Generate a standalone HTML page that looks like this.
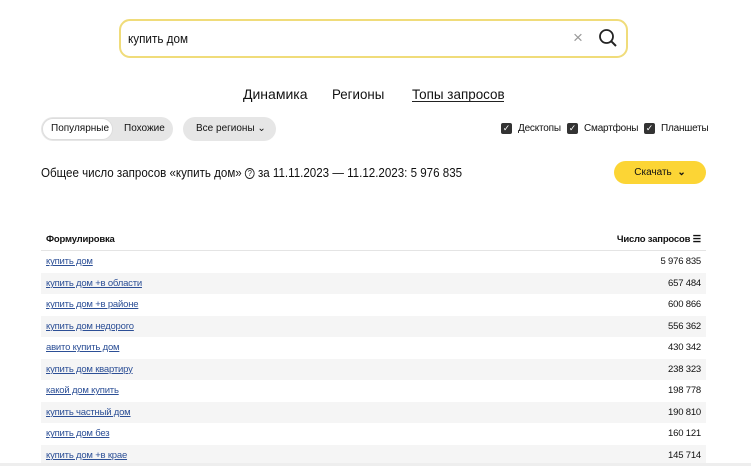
<!DOCTYPE html>
<html><head><meta charset="utf-8"><style>
body{margin:0;width:751px;height:466px;background:#fff;font-family:"Liberation Sans",sans-serif;position:relative;overflow:hidden;color:#111}
.a{position:absolute}
.search{left:119px;top:19px;width:505px;height:35px;border:2px solid #f0dc7a;border-radius:11px}
.tab{top:86px;font-size:14px}
.seg{top:117px;height:24px;border-radius:12px;background:#e6e6e6;font-size:10px}
.cb{top:123px;width:11px;height:11px;background:#333;border-radius:2px;color:#fff;font-size:9px;line-height:11px;text-align:center}
.cl{top:123px;font-size:10px;line-height:12px;letter-spacing:-0.2px}
table{position:absolute;left:41px;top:229px;width:665px;border-collapse:collapse;font-size:9.5px;letter-spacing:-0.2px}
td,th{height:21.5px;padding:0 5px;line-height:21px}
th{font-weight:bold;text-align:left;border-bottom:1px solid #e4e4e4;height:19px}
td a{color:#2c4f96;text-decoration:underline}
td:last-child,th:last-child{text-align:right}
tr:nth-child(odd) td{background:#f5f5f5}
</style></head><body>
<div class="a search"></div>
<div class="a" style="left:128px;top:31px;font-size:13px;transform:scaleX(0.9);transform-origin:left">купить дом</div>
<div class="a" style="left:573px;top:28px;font-size:17px;color:#999">×</div>
<svg class="a" style="left:598px;top:28px" width="20" height="20" viewBox="0 0 20 20"><circle cx="8.5" cy="8.5" r="6.5" fill="none" stroke="#222" stroke-width="1.8"/><line x1="13.2" y1="13.2" x2="18" y2="18" stroke="#222" stroke-width="2"/></svg>
<div class="a tab" style="left:243px">Динамика</div>
<div class="a tab" style="left:332px;transform:scaleX(0.95);transform-origin:left">Регионы</div>
<div class="a tab" style="left:412px;transform:scaleX(0.96);transform-origin:left">Топы запросов</div>
<div class="a" style="left:412px;top:101px;width:92px;height:1px;background:#222"></div>
<div class="a seg" style="left:41px;width:132px"></div>
<div class="a" style="left:42px;top:118px;width:71px;height:22px;border-radius:11px;background:#fff;border:1px solid #ddd;box-sizing:border-box"></div>
<div class="a" style="left:51px;top:123px;font-size:10px">Популярные</div>
<div class="a" style="left:124px;top:123px;font-size:10px">Похожие</div>
<div class="a seg" style="left:183px;width:93px"></div>
<div class="a" style="left:196px;top:123px;font-size:10px">Все регионы ⌄</div>
<div class="a cb" style="left:501px">✓</div><div class="a cl" style="left:518px">Десктопы</div>
<div class="a cb" style="left:567px">✓</div><div class="a cl" style="left:584px">Смартфоны</div>
<div class="a cb" style="left:644px">✓</div><div class="a cl" style="left:661px">Планшеты</div>
<div class="a" style="left:41px;top:165px;font-size:13px;white-space:nowrap;transform:scaleX(0.89);transform-origin:left">Общее число запросов «купить дом» <span style="display:inline-block;width:9px;height:9px;border:1.3px solid #222;border-radius:50%;font-size:8px;line-height:9px;text-align:center;vertical-align:1px">?</span> за 11.11.2023 — 11.12.2023: 5 976 835</div>
<div class="a" style="left:614px;top:161px;width:92px;height:23px;border-radius:12px;background:#fcd535;font-size:10px;line-height:23px;text-align:center">Скачать &nbsp;<b>⌄</b></div>
<table>
<tr><th>Формулировка</th><th>Число запросов ☰</th></tr>
<tr><td><a>купить дом</a></td><td>5 976 835</td></tr>
<tr><td><a>купить дом +в области</a></td><td>657 484</td></tr>
<tr><td><a>купить дом +в районе</a></td><td>600 866</td></tr>
<tr><td><a>купить дом недорого</a></td><td>556 362</td></tr>
<tr><td><a>авито купить дом</a></td><td>430 342</td></tr>
<tr><td><a>купить дом квартиру</a></td><td>238 323</td></tr>
<tr><td><a>какой дом купить</a></td><td>198 778</td></tr>
<tr><td><a>купить частный дом</a></td><td>190 810</td></tr>
<tr><td><a>купить дом без</a></td><td>160 121</td></tr>
<tr><td><a>купить дом +в крае</a></td><td>145 714</td></tr>
</table>
<div class="a" style="left:0;top:463px;width:751px;height:3px;background:#eee"></div>
</body></html>
